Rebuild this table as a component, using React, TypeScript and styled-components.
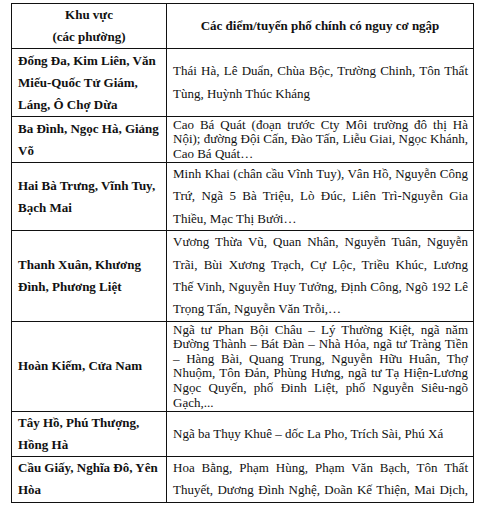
import styled, { createGlobalStyle } from "styled-components";

const GlobalStyle = createGlobalStyle`
  html, body {
    margin: 0;
    padding: 0;
    background: #fff;
  }
  body {
    font-family: "Liberation Serif", "Times New Roman", serif;
    color: #111;
  }
`;

const Page = styled.div`
  padding: 3px 0 0 11px;
  width: 479px;
  height: 509px;
  box-sizing: border-box;
  overflow: hidden;
`;

const Table = styled.table`
  border-collapse: collapse;
  table-layout: fixed;
  width: 463px;
  font-size: 13px;
`;

const Row = styled.tr<{ $h: number }>`
  height: ${(p) => p.$h}px;
`;

const HeadCell = styled.th`
  border: 1px solid #111;
  font-weight: 700;
  text-align: center;
  vertical-align: middle;
  line-height: 22px;
  padding: 0 5px;
`;

const AreaCell = styled.td`
  border: 1px solid #111;
  font-weight: 700;
  vertical-align: middle;
  line-height: 22px;
  padding: 0 6px;
`;

const StreetCell = styled.td<{ $compact?: boolean }>`
  border: 1px solid #111;
  vertical-align: middle;
  line-height: ${(p) => (p.$compact ? "14.6px" : "22.4px")};
  padding: 0 5px 0 6px;
`;

// one printed line of the street list; all but the closing line are justified
const Line = styled.span<{ $fill: boolean }>`
  display: block;
  white-space: nowrap;
  text-align: left;
  text-align-last: ${(p) => (p.$fill ? "justify" : "left")};
`;

type Entry = {
  h: number;
  area: string;
  lines: string[];
  compact?: boolean;
  open?: boolean; // list continues past the picture, so last line is full too
};

const rows: Entry[] = [
  {
    h: 68,
    area: "Đống Đa, Kim Liên, Văn Miếu-Quốc Tử Giám, Láng, Ô Chợ Dừa",
    lines: ["Thái Hà, Lê Duẩn, Chùa Bộc, Trường Chinh, Tôn Thất", "Tùng, Huỳnh Thúc Kháng"],
  },
  {
    h: 46,
    area: "Ba Đình, Ngọc Hà, Giảng Võ",
    lines: [
      "Cao Bá Quát (đoạn trước Cty Môi trường đô thị Hà",
      "Nội); đường Đội Cấn, Đào Tấn, Liễu Giai, Ngọc Khánh,",
      "Cao Bá Quát…",
    ],
    compact: true,
  },
  {
    h: 67,
    area: "Hai Bà Trưng, Vĩnh Tuy, Bạch Mai",
    lines: [
      "Minh Khai (chân cầu Vĩnh Tuy), Vân Hồ, Nguyễn Công",
      "Trứ, Ngã 5 Bà Triệu, Lò Đúc, Liên Trì-Nguyễn Gia",
      "Thiều, Mạc Thị Bưởi…",
    ],
  },
  {
    h: 90,
    area: "Thanh Xuân, Khương Đình, Phương Liệt",
    lines: [
      "Vương Thừa Vũ, Quan Nhân, Nguyễn Tuân, Nguyễn",
      "Trãi, Bùi Xương Trạch, Cự Lộc, Triều Khúc, Lương",
      "Thế Vinh, Nguyễn Huy Tưởng, Định Công, Ngõ 192 Lê",
      "Trọng Tấn, Nguyễn Văn Trỗi,…",
    ],
  },
  {
    h: 90,
    area: "Hoàn Kiếm, Cửa Nam",
    lines: [
      "Ngã tư Phan Bội Châu – Lý Thường Kiệt, ngã năm",
      "Đường Thành – Bát Đàn – Nhà Hỏa, ngã tư Tràng Tiền",
      "– Hàng Bài, Quang Trung, Nguyễn Hữu Huân, Thợ",
      "Nhuộm, Tôn Đản, Phùng Hưng, ngã tư Tạ Hiện-Lương",
      "Ngọc Quyến, phố Đinh Liệt, phố Nguyễn Siêu-ngõ",
      "Gạch,...",
    ],
    compact: true,
  },
  {
    h: 45,
    area: "Tây Hồ, Phú Thượng, Hồng Hà",
    lines: ["Ngã ba Thụy Khuê – dốc La Pho, Trích Sài, Phú Xá"],
  },
  {
    h: 45,
    area: "Cầu Giấy, Nghĩa Đô, Yên Hòa",
    lines: [
      "Hoa Bằng, Phạm Hùng, Phạm Văn Bạch, Tôn Thất",
      "Thuyết, Dương Đình Nghệ, Doãn Kế Thiện, Mai Dịch,",
    ],
    open: true,
  },
];

export default function App() {
  return (
    <>
      <GlobalStyle />
      <Page>
        <Table>
          <colgroup>
            <col style={{ width: 155 }} />
            <col />
          </colgroup>
          <tbody>
            <Row $h={45}>
              <HeadCell>
                Khu vực
                <br />
                (các phường)
              </HeadCell>
              <HeadCell>Các điểm/tuyến phố chính có nguy cơ ngập</HeadCell>
            </Row>
            {rows.map((r) => (
              <Row key={r.area} $h={r.h}>
                <AreaCell>{r.area}</AreaCell>
                <StreetCell $compact={r.compact}>
                  {r.lines.map((l, i) => (
                    <Line key={i} $fill={r.open || i < r.lines.length - 1}>
                      {l}
                    </Line>
                  ))}
                </StreetCell>
              </Row>
            ))}
          </tbody>
        </Table>
      </Page>
    </>
  );
}
